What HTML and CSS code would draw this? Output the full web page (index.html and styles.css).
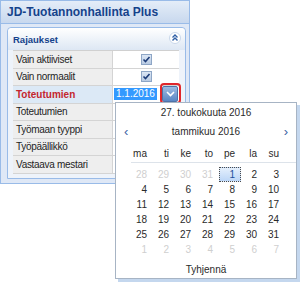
FILE: index.html
```html
<!DOCTYPE html>
<html lang="fi">
<head>
    <meta charset="UTF-8">
    <title>JD-Tuotannonhallinta Plus</title>
    <link rel="stylesheet" href="styles.css">
</head>
<body>

<div class="window">
    <div class="win-title">JD-Tuotannonhallinta Plus</div>
    <div class="win-body">
        <div class="section">
            <div class="section-head">
                <span>Rajaukset</span>
                <span class="collapse">
                    <svg width="12" height="12" viewBox="0 0 12 12">
                        <circle cx="6" cy="6" r="5.5" fill="#fff" stroke="#c9d7ea"/>
                        <path d="M3.5 5.5 L6 3 L8.5 5.5 M3.5 8.5 L6 6 L8.5 8.5" stroke="#2f5fa6" stroke-width="1.4" fill="none"/>
                    </svg>
                </span>
            </div>
            <div class="grid">
                <div class="label">Vain aktiiviset</div>
                <div class="value center"><span class="check"><svg width="9" height="9" viewBox="0 0 9 9"><path d="M1.5 4.5 L3.5 6.5 L7.5 2" stroke="#1d3c78" stroke-width="1.6" fill="none"/></svg></span></div>

                <div class="label">Vain normaalit</div>
                <div class="value center"><span class="check"><svg width="9" height="9" viewBox="0 0 9 9"><path d="M1.5 4.5 L3.5 6.5 L7.5 2" stroke="#1d3c78" stroke-width="1.6" fill="none"/></svg></span></div>

                <div class="label selected">Toteutumien</div>
                <div class="value date-cell">
                    <span class="date-text">1.1.2016</span>
                    <span class="drop-btn">
                        <svg width="9" height="6" viewBox="0 0 9 6"><path d="M1 1 L4.5 4.5 L8 1" stroke="#fff" stroke-width="1.6" fill="none"/></svg>
                    </span>
                    <span class="mark"></span>
                </div>

                <div class="label">Toteutumien</div>
                <div class="value"></div>

                <div class="label">Työmaan tyyppi</div>
                <div class="value"></div>

                <div class="label">Työpäällikkö</div>
                <div class="value"></div>

                <div class="label last">Vastaava mestari</div>
                <div class="value last"></div>
            </div>
        </div>
    </div>
</div>

<div class="calendar">
    <div class="cal-today">27. toukokuuta 2016</div>
    <div class="cal-nav">
        <span class="arrow">&lsaquo;</span>
        <span class="month">tammikuu 2016</span>
        <span class="arrow">&rsaquo;</span>
    </div>
    <div class="cal-days">
        <span>ma</span><span>ti</span><span>ke</span><span>to</span><span>pe</span><span>la</span><span>su</span>
    </div>
    <div class="cal-grid">
        <span class="other">28</span><span class="other">29</span><span class="other">30</span><span class="other">31</span><span class="sel">1</span><span>2</span><span>3</span>
        <span>4</span><span>5</span><span>6</span><span>7</span><span>8</span><span>9</span><span>10</span>
        <span>11</span><span>12</span><span>13</span><span>14</span><span>15</span><span>16</span><span>17</span>
        <span>18</span><span>19</span><span>20</span><span>21</span><span>22</span><span>23</span><span>24</span>
        <span>25</span><span>26</span><span>27</span><span>28</span><span>29</span><span>30</span><span>31</span>
        <span class="other">1</span><span class="other">2</span><span class="other">3</span><span class="other">4</span><span class="other">5</span><span class="other">6</span><span class="other">7</span>
    </div>
    <div class="cal-clear">Tyhjennä</div>
</div>

</body>
</html>
```

FILE: styles.css
```css
body {
    margin: 0;
    background-color: #fff;
    font-family: "Liberation Sans", Arial, sans-serif;
}

.window {
    width: 188px;
    border: 1px solid #99bbe8;
    background-color: #dfe8f6;
}

.win-title {
    height: 22px;
    line-height: 22px;
    padding-left: 6px;
    font-size: 12px;
    font-weight: bold;
    color: #15428b;
    background: linear-gradient(#e4edf8, #c8d8ee);
    border-bottom: 1px solid #99bbe8;
}

.win-body {
    padding: 3px 3px 4px 6px;
}

.section {
    border: 1px solid #99bbe8;
    border-radius: 4px 4px 0 0;
    background-color: #eef3fa;
    padding-bottom: 4px;
}

.section-head {
    height: 22px;
    display: flex;
    align-items: center;
    justify-content: space-between;
    padding: 0 4px 0 5px;
    font-size: 9.5px;
    font-weight: bold;
    color: #15428b;
    background: linear-gradient(#ffffff, #dde7f4);
    border-radius: 4px 4px 0 0;
}

.collapse {
    display: flex;
    margin-bottom: 3px;
}

.grid {
    display: grid;
    grid-template-columns: 100px 66px;
    margin: 0 6px 0 5px;
    border-top: 1px solid #d0d0d0;
    background-color: #fff;
    font-size: 10px;
}

.label, .value {
    height: 16.5px;
    border-bottom: 1px solid #d4d4d4;
}

.label {
    display: flex;
    align-items: center;
    padding-left: 3px;
    background-color: #eeeeee;
    border-right: 1px solid #d4d4d4;
    color: #1e1e1e;
    letter-spacing: -0.3px;
}

.label.selected {
    background-color: #dce9f6;
    color: #c4262e;
    font-weight: bold;
    letter-spacing: 0;
}

.value {
    display: flex;
    align-items: center;
}

.value.center {
    justify-content: center;
}

.check {
    display: flex;
    align-items: center;
    justify-content: center;
    width: 9px;
    height: 9px;
    border: 1px solid #8ea6c6;
    background: linear-gradient(#dbe6f4, #b9cbe3);
}

.date-cell {
    position: relative;
    padding-left: 1px;
}

.date-text {
    padding: 0 2px;
    line-height: 12px;
    background-color: #3399ff;
    color: #fff;
}

.drop-btn {
    display: flex;
    align-items: center;
    justify-content: center;
    width: 14px;
    height: 14px;
    margin-left: auto;
    margin-right: 1px;
    border: 1px solid #4e73a8;
    border-radius: 2px;
    background: linear-gradient(#9dbbe2, #5a86c4);
}

.mark {
    position: absolute;
    right: -2px;
    top: -3px;
    width: 17px;
    height: 17px;
    border: 2px solid #e0262b;
    border-radius: 4px;
}

.calendar {
    position: absolute;
    left: 115px;
    top: 102px;
    width: 180px;
    height: 175px;
    border: 1px solid #a7b4c4;
    background-color: #fff;
    box-shadow: 3px 3px 0 #c4d7ee;
    font-size: 10px;
    color: #2a2a2a;
}

.cal-today {
    height: 20px;
    line-height: 20px;
    text-align: center;
}

.cal-nav {
    display: flex;
    justify-content: space-between;
    align-items: center;
    height: 17px;
    padding: 0 8px;
}

.arrow {
    font-size: 13px;
    color: #3a64a3;
}

.cal-days {
    display: grid;
    grid-template-columns: repeat(7, 22px);
    margin: 6px 0 0 15px;
    height: 16px;
    line-height: 16px;
    border-bottom: 1px solid #dde3ea;
}

.cal-days span, .cal-grid span {
    text-align: right;
    padding-right: 6px;
}

.cal-grid {
    display: grid;
    grid-template-columns: repeat(7, 22px);
    grid-auto-rows: 15px;
    margin: 4px 0 0 15px;
    line-height: 15px;
}

.cal-grid span {
    color: #2a2a2a;
}

.cal-grid .other {
    color: #cfcfcf;
}

.cal-grid .sel {
    border: 1px dotted #4b4b4b;
    background: linear-gradient(#e4effc, #bcd6f7);
    color: #1f4f9c;
    line-height: 13px;
    padding-right: 5px;
}

.cal-clear {
    margin-top: 6px;
    height: 14px;
    line-height: 14px;
    text-align: center;
}
```
